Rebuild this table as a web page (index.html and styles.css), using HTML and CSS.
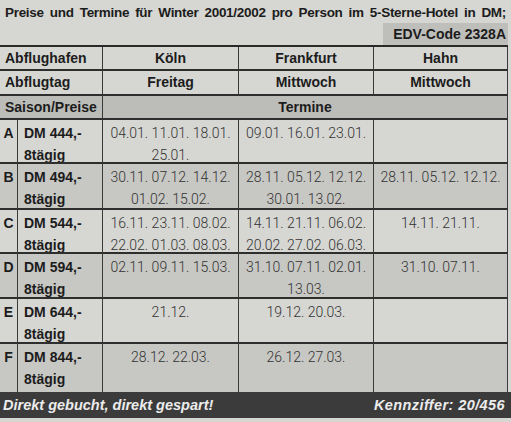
FILE: index.html
```html
<!DOCTYPE html>
<html lang="de">
<head>
<meta charset="utf-8">
<title>Preise und Termine Winter 2001/2002</title>
<link rel="stylesheet" href="styles.css">
</head>
<body>
<div class="card">
  <div class="title">Preise und Termine für Winter 2001/2002 pro Person im 5-Sterne-Hotel in DM;</div>
  <div class="coderow"><div class="code">EDV-Code 2328A</div></div>
  <div class="grid">
    <div class="c head span2 left">Abflughafen</div>
    <div class="c head">Köln</div>
    <div class="c head">Frankfurt</div>
    <div class="c head">Hahn</div>

    <div class="c head span2 left">Abflugtag</div>
    <div class="c head">Freitag</div>
    <div class="c head">Mittwoch</div>
    <div class="c head">Mittwoch</div>

    <div class="c head span2 left dark2">Saison/Preise</div>
    <div class="c head span3 dark2">Termine</div>

    <div class="c letter">A</div>
    <div class="c price">DM 444,-<br>8tägig</div>
    <div class="c dates">04.01. 11.01. 18.01.<br>25.01.</div>
    <div class="c dates">09.01. 16.01. 23.01.</div>
    <div class="c dates"></div>

    <div class="c letter dark">B</div>
    <div class="c price dark">DM 494,-<br>8tägig</div>
    <div class="c dates dark">30.11. 07.12. 14.12.<br>01.02. 15.02.</div>
    <div class="c dates dark">28.11. 05.12. 12.12.<br>30.01. 13.02.</div>
    <div class="c dates dark">28.11. 05.12. 12.12.</div>

    <div class="c letter">C</div>
    <div class="c price">DM 544,-<br>8tägig</div>
    <div class="c dates">16.11. 23.11. 08.02.<br>22.02. 01.03. 08.03.</div>
    <div class="c dates">14.11. 21.11. 06.02.<br>20.02. 27.02. 06.03.</div>
    <div class="c dates">14.11. 21.11.</div>

    <div class="c letter dark">D</div>
    <div class="c price dark">DM 594,-<br>8tägig</div>
    <div class="c dates dark">02.11. 09.11. 15.03.</div>
    <div class="c dates dark">31.10. 07.11. 02.01.<br>13.03.</div>
    <div class="c dates dark">31.10. 07.11.</div>

    <div class="c letter">E</div>
    <div class="c price">DM 644,-<br>8tägig</div>
    <div class="c dates">21.12.</div>
    <div class="c dates">19.12. 20.03.</div>
    <div class="c dates"></div>

    <div class="c letter dark nob">F</div>
    <div class="c price dark nob">DM 844,-<br>8tägig</div>
    <div class="c dates dark nob">28.12. 22.03.</div>
    <div class="c dates dark nob">26.12. 27.03.</div>
    <div class="c dates dark nob"></div>
  </div>
  <div class="footer">
    <span class="slogan">Direkt gebucht, direkt gespart!</span>
    <span class="kz">Kennziffer: 20/456</span>
  </div>
</div>
</body>
</html>
```
FILE: styles.css
```css
* { box-sizing: border-box; }
html, body { margin: 0; padding: 0; }
body {
  width: 511px;
  height: 422px;
  background: #d6d6d2;
  overflow: hidden;
}
.card {
  width: 511px;
  height: 422px;
  background: #d6d6d2;
  font-family: "Liberation Sans", "DejaVu Sans", sans-serif;
  color: #1c1c1c;
  overflow: hidden;
}
.title {
  width: 506px;
  height: 23px;
  padding-left: 5px;
  padding-top: 4px;
  font-weight: bold;
  font-size: 13.5px;
  line-height: 18px;
  letter-spacing: -0.3px;
  text-align: justify;
  text-align-last: justify;
  overflow: hidden;
}
.coderow {
  height: 22px;
  display: flex;
  justify-content: flex-end;
  padding-right: 3px;
}
.code {
  width: 125px;
  background: #bebebb;
  font-weight: bold;
  font-size: 14px;
  line-height: 22px;
  text-align: right;
  padding-right: 2px;
}
.grid {
  display: grid;
  grid-template-columns: 18px 85px 136px 135px 134px;
  grid-template-rows: 24px 25px 24px 44px 46px 44px 45px 45px 48px;
  border-top: 2px solid #2a2a2a;
  width: 508px;
}
.c {
  border-bottom: 2px solid #2e2e2e;
  border-right: 1px solid #3a3a3a;
  overflow: hidden;
}
.nob { border-bottom: none; }
.head {
  font-weight: bold;
  font-size: 14px;
  line-height: 23px;
  text-align: center;
}
.left { text-align: left; padding-left: 5px; }
.span2 { grid-column: span 2; }
.span3 { grid-column: span 3; }
.dark { background: #c7c7c3; }
.dark2 { background: #bcbcb8; }
.letter {
  font-weight: bold;
  font-size: 14px;
  line-height: 22px;
  text-align: center;
  padding-top: 2px;
}
.price {
  font-weight: bold;
  font-size: 14px;
  line-height: 22px;
  padding-left: 6px;
  padding-top: 2px;
  white-space: nowrap;
}
.dates {
  font-family: "Roboto", "Liberation Sans", sans-serif;
  font-weight: 300;
  font-size: 14px;
  line-height: 22px;
  color: #333333;
  text-align: center;
  padding-top: 2px;
  white-space: nowrap;
}
.footer {
  height: 26px;
  background: #3b3b3b;
  display: flex;
  justify-content: space-between;
  align-items: center;
  padding: 0 6px 0 3px;
  color: #ececec;
  font-family: "Liberation Sans", "DejaVu Sans", sans-serif;
  font-weight: bold;
  font-style: italic;
  font-size: 14.5px;
}
.kz { letter-spacing: 0.4px; }
```
